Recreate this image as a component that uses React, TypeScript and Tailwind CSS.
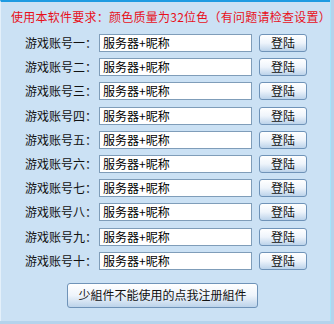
const font = { fontFamily: '"Noto Sans CJK SC", "Noto Sans", sans-serif' }

const accounts = ["一", "二", "三", "四", "五", "六", "七", "八", "九", "十"]

function LoginButton() {
  return (
    <button className="ml-[7px] h-[18px] w-[48px] rounded-[3px] border border-[#6f93b8] bg-gradient-to-b from-white via-[#eef4fb] to-[#bcd3ea] text-[12px] leading-none text-[#111]">
      登陆
    </button>
  )
}

export default function App() {
  return (
    <div className="flex h-[324px] w-[334px] bg-[#b4d3ec] [text-spacing-trim:space-all]" style={font}>
      <div className="flex h-[321px] w-[330px] flex-col border-t-2 border-l border-t-[#1e9be2] border-l-[#e4f0fa] bg-[#cbe1f4]">
        <div className="flex h-[29px] items-center whitespace-nowrap pl-[10px] text-[12px] tracking-[0.25px] text-[#e8101a]">
          使用本软件要求：颜色质量为32位色（有问题请检查设置）
        </div>
        {accounts.map((n) => (
          <div key={n} className="flex h-[24.2px] items-center">
            <div className="w-[96px] text-right text-[12px] text-[#111]">游戏账号{n}：</div>
            <input
              defaultValue="服务器+昵称"
              className="ml-[2px] h-[18px] w-[153px] border border-[#7f9db9] bg-white px-[3px] text-[12px] text-black outline-none"
            />
            <LoginButton />
          </div>
        ))}
        <button className="ml-[66px] mt-[10px] h-[25px] w-[191px] rounded-[3px] border border-[#6f93b8] bg-gradient-to-b from-white via-[#eef4fb] to-[#bcd3ea] text-[12px] text-[#111]">
          少組件不能使用的点我注册組件
        </button>
      </div>
      <div className="h-[321px] w-px bg-[#a6e6fa]" />
    </div>
  )
}
